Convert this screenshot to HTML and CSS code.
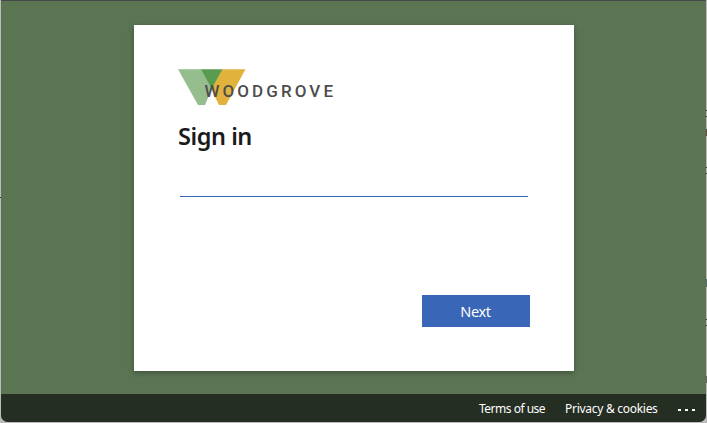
FILE: index.html
```html
<!DOCTYPE html>
<html lang="en">
<head>
<meta charset="utf-8">
<title>Sign in</title>
<link rel="stylesheet" href="styles.css">
</head>
<body>
<div class="window">
  <main class="stage">
    <form class="card">
      <svg class="logo" width="160" height="37" viewBox="0 0 160 37" role="img" aria-label="Woodgrove">
        <path fill="#95bd8e" d="M0 0.2H24L34 19L27 36H20Z"/>
        <path fill="#e2b33c" d="M44 0.2H67.5L48 36H41L33 19.5Z"/>
        <path fill="#599b50" d="M23 0.2H44.5L33.7 19.5Z"/>
        <text class="wordmark" x="26.500" y="28" textLength="128.500" lengthAdjust="spacing">WOODGROVE</text>
      </svg>
      <h1 class="title">Sign in</h1>
      <input class="field" type="text" aria-label="Email">
      <button class="next" type="button">Next</button>
    </form>
  </main>
  <footer class="footer">
    <a class="terms">Terms of use</a>
    <a class="privacy">Privacy &amp; cookies</a>
    <svg class="more" width="18" height="4" viewBox="0 0 18 4" fill="#fff"><path d="M0 1h3v2H0zM7 1h3v2H7zM14 1h3v2h-3z"/></svg>
  </footer>
</div>
</body>
</html>
```
FILE: styles.css
```css
* { box-sizing: border-box; }
body {
  margin: 0;
  width: 707px;
  height: 423px;
  overflow: hidden;
  background-color: #bcbcbc;
  /* small marks visible along the window's outer edges */
  background-image:
    linear-gradient(#333, #333), linear-gradient(#333, #333), linear-gradient(#333, #333),
    linear-gradient(#684c43, #684c43), linear-gradient(#333, #333), linear-gradient(#333, #333),
    linear-gradient(#596b75, #596b75), linear-gradient(#333, #333), linear-gradient(#333, #333),
    linear-gradient(#666567, #666567);
  background-repeat: no-repeat;
  background-size: 1px 1px, 1px 1px, 1px 1px, 1px 7px, 1px 1px, 1px 1px, 1px 8px, 1px 1px, 1px 1px, 1px 7px;
  background-position: 0 197px, 706px 110px, 706px 116px, 706px 129px, 706px 167px, 706px 173px, 706px 279px, 706px 319px, 706px 325px, 706px 376px;
  font-family: "Noto Sans", "Open Sans", sans-serif;
}
.window {
  display: flex;
  flex-direction: column;
  height: 422px;
  margin: 0 1px;
  border-top: 1px solid #484848;
  border-radius: 0 0 7px 7px;
  overflow: hidden;
  background: #5b7553;
}
.stage {
  flex: 1;
  padding: 24px 0 0 133px;
}
.card {
  display: flex;
  flex-direction: column;
  width: 440px;
  height: 346px;
  padding: 44px;
  background: #fff;
  box-shadow: 0 2px 6px rgba(0, 0, 0, 0.3);
}
.logo { display: block; flex: none; }
.wordmark {
  font: 500 17px Roboto, sans-serif;
  fill: #4d4d4d;
}
.title {
  margin: 13px 0 0;
  height: 34px;
  font-size: 23.5px;
  line-height: 34px;
  font-weight: 600;
  letter-spacing: -0.45px;
  color: #1b1b1b;
}
.field {
  width: 348px;
  height: 36px;
  margin: 8px 0 0 2px;
  padding: 6px 0;
  border: 0;
  border-bottom: 1px solid #3966b4;
  outline: none;
  font: inherit;
  font-size: 15px;
}
.next {
  align-self: flex-end;
  width: 108px;
  height: 32px;
  margin: 98px 0 0;
  padding: 0 1px 0 0;
  border: 0;
  background: #3966b6;
  color: #fff;
  font-family: inherit;
  font-size: 14.5px;
  line-height: 32px;
  letter-spacing: -0.3px;
}
.footer {
  display: flex;
  align-items: center;
  justify-content: flex-end;
  height: 28px;
  padding: 1px 10px 0 0;
  background: #252e23;
  color: #fff;
  font-size: 12px;
  line-height: 28px;
}
.terms { width: 67px; margin-right: 19px; letter-spacing: -0.5px; white-space: nowrap; }
.privacy { width: 94px; margin-right: 19px; letter-spacing: -0.28px; white-space: nowrap; }
.more { margin-top: 3px; }
```
